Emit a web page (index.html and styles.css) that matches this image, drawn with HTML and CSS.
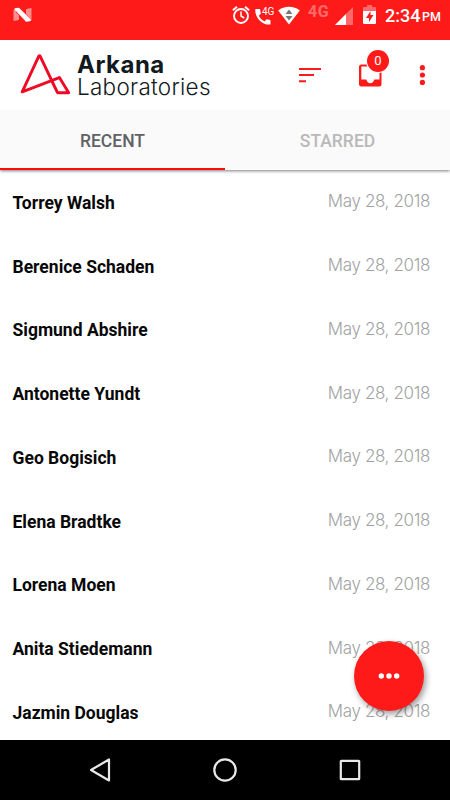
FILE: index.html
```
<!DOCTYPE html>
<html lang="en">
<head>
<meta charset="utf-8">
<title>Arkana Laboratories</title>
<link rel="stylesheet" href="styles.css">
</head>
<body>
<div class="screen">
  <div class="status">
    <svg class="notif" width="20" height="16" viewBox="0 0 20 16"><path d="M.5 3.500 3 1v10L.5 14zM.5 3 6 8v5l-5.500 1zM18.500 1v11.500L13 7V2z" fill="#fff" opacity=".5"/><path d="M1.500 1.500Q2.500.7 6 .7L18.500 13q-1 1.700-5.500 1.700L1.500 2.500z" fill="#fff"/></svg>
    <div class="tray">
      <svg width="18" height="20" viewBox="0 0 18 20" fill="none" stroke="#fff"><circle cx="9" cy="11" r="7" stroke-width="1.900"/><path d="M9 6.500V11l3.200 2" stroke-width="1.500"/><path d="M.9 5.200 5 1.800M13 1.800l4.100 3.400" stroke-width="2"/></svg>
      <div class="call">
        <svg width="16" height="17" viewBox="0 0 16 17"><path d="M1 1h3.300q.8 0 .9.800.1 1.700.6 3.200.2.500-.2 1L3.700 7.700q2 3.800 5.800 5.700l1.800-1.900q.4-.4 1-.2 1.400.5 2.400.5.800 0 .8.900v3q0 .9-.9.900C6.500 16.700.2 9.500.2 1.900.2 1.300.5 1 1 1z" fill="#fff"/></svg>
        <span class="call-net">4G</span>
      </div>
      <svg class="wifi" width="22" height="19" viewBox="0 0 22 19"><path d="M11 18.500.2 4.400Q5 .7 11 .7t10.800 3.700z" fill="#fff"/><path d="m7.500 8 3.500-4.500L14.500 8zM7.500 10h7L11 14.500z" fill="#777"/></svg>
      <span class="net">4G</span>
      <svg class="signal" width="18" height="18" viewBox="0 0 18 18"><path d="M18 0v18H0z" fill="#fff" opacity=".35"/><path d="M11 7v11H0z" fill="#fff"/></svg>
      <svg class="battery" width="13" height="20" viewBox="0 0 13 20"><path d="M0 6V3q0-1 1-1h3V0h5v2h3q1 0 1 1v3z" fill="#fff" opacity=".35"/><path fill-rule="evenodd" d="M0 6h13v12q0 1-1 1H1q-1 0-1-1zm7.500 0L3 13h3v4l4.500-7h-3z" fill="#fff"/></svg>
      <span class="time">2:34</span><span class="pm">PM</span>
    </div>
  </div>
  <header class="bar">
    <svg class="mark" width="52" height="42" viewBox="0 0 52 42" fill="none" stroke="#ee0a24" stroke-width="2.900" stroke-linejoin="round"><path d="M37.500 38.700 20.200 2.300q-.7-1.300-1.500 0L2.200 37.900l37.200-14.300L48.700 38.700H37.500L31.600 26.600"/></svg>
    <div class="brand"><span class="brand-top">Arkana</span><span class="brand-sub">Laboratories</span></div>
    <svg class="sort" width="22" height="16" viewBox="0 0 22 16" fill="#ff1a1a"><path d="M0 1h22v2H0zM0 7h15v2H0zM0 13.200h7v2H0z"/></svg>
    <div class="inbox">
      <svg width="23" height="23" viewBox="0 0 23 23"><path fill-rule="evenodd" d="M2.300.5h18q2.200 0 2.200 2.200v17.500q0 2.300-2.200 2.300h-18q-2.300 0-2.300-2.300V2.700Q0 .5 2.300.5zM2.300 2.500v13h5q1 3.700 4 3.700t4-3.700h5.200v-13z" fill="#ff1a1a"/></svg>
      <span class="badge">0</span>
    </div>
    <svg class="more" width="6" height="20" viewBox="0 0 6 20" fill="#ff1a1a"><circle cx="3.400" cy="2.700" r="2.600"/><circle cx="3.400" cy="10" r="2.600"/><circle cx="3.400" cy="17.400" r="2.600"/></svg>
  </header>
  <nav class="tabs"><div class="tab active">RECENT</div><div class="tab">STARRED</div></nav>
  <main class="list">
    <div class="row"><span class="name">Torrey Walsh</span><span class="date">May 28, 2018</span></div>
    <div class="row"><span class="name">Berenice Schaden</span><span class="date">May 28, 2018</span></div>
    <div class="row"><span class="name">Sigmund Abshire</span><span class="date">May 28, 2018</span></div>
    <div class="row"><span class="name">Antonette Yundt</span><span class="date">May 28, 2018</span></div>
    <div class="row"><span class="name">Geo Bogisich</span><span class="date">May 28, 2018</span></div>
    <div class="row"><span class="name">Elena Bradtke</span><span class="date">May 28, 2018</span></div>
    <div class="row"><span class="name">Lorena Moen</span><span class="date">May 28, 2018</span></div>
    <div class="row"><span class="name">Anita Stiedemann</span><span class="date">May 28, 2018</span></div>
    <div class="row"><span class="name">Jazmin Douglas</span><span class="date">May 28, 2018</span></div>
  </main>
  <div class="fab"><svg width="22" height="6" viewBox="0 0 22 6" fill="#fff"><circle cx="3.300" cy="3" r="2.700"/><circle cx="11" cy="3" r="2.700"/><circle cx="18.700" cy="3" r="2.700"/></svg></div>
  <footer class="keys">
    <svg width="26" height="26" viewBox="0 0 26 26"><path d="M22 2.500v21L4 13z"/></svg>
    <svg width="26" height="26" viewBox="0 0 26 26"><circle cx="13" cy="13" r="10.700"/></svg>
    <svg width="26" height="26" viewBox="0 0 26 26"><rect x="3.800" y="3.800" width="18.400" height="18.400" rx=".5"/></svg>
  </footer>
</div>
</body>
</html>
```
FILE: styles.css
```
* { box-sizing: border-box; }
body { margin: 0; background: #fff; font-family: Roboto, sans-serif; }
svg { display: block; flex: none; }
.screen { position: relative; width: 450px; height: 800px; overflow: hidden; display: flex; flex-direction: column; }
.status { height: 40px; flex: none; background: #ff1a1a; display: flex; justify-content: space-between; padding: 5px 0 0 13px; color: #fff; }
.notif { margin-top: 2px; }
.tray { display: flex; align-items: flex-start; width: 218px; }
.call { position: relative; margin: 3px 0 0 5px; width: 20px; }
.call-net { position: absolute; left: 7px; top: -3px; font: 400 10px/13px Roboto, sans-serif; }
.wifi { margin: 1px 0 0 3px; }
.net { width: 22px; margin-left: 8px; font: 700 16px/13px Roboto, sans-serif; letter-spacing: .5px; opacity: .35; }
.signal { margin: 2px 0 0 5px; }
.battery { margin-left: 10px; }
.time { width: 37px; margin-left: 9px; font: 500 18px/22px Roboto, sans-serif; }
.pm { font: 500 12.5px/24px Roboto, sans-serif; }
.bar { height: 70px; flex: none; display: flex; align-items: flex-start; padding-left: 20px; background: #fff; position: relative; z-index: 2; }
.mark { margin-top: 14px; }
.brand { display: flex; flex-direction: column; width: 140px; margin: 13px 0 0 5px; font-family: Inter, sans-serif; color: #111921; white-space: nowrap; }
.brand-top { font-size: 24px; line-height: 23px; font-weight: 700; letter-spacing: .5px; }
.brand-sub { font-size: 22.5px; line-height: 21px; font-weight: 300; letter-spacing: .28px; }
.sort { margin: 27px 0 0 82px; }
.inbox { position: relative; margin: 24px 0 0 38px; }
.badge { position: absolute; left: 8px; top: -14px; width: 22px; height: 22px; border-radius: 50%; background: #ff1a1a; color: #fff; box-shadow: 0 0 0 1px #fff; font-size: 13px; line-height: 22px; text-align: center; }
.more { margin: 25px 0 0 37px; }
.tabs { height: 60px; flex: none; display: flex; background: #fafafa; box-shadow: 0 1px 3px rgba(0,0,0,.5); position: relative; z-index: 1; }
.tab { flex: 1; text-align: center; font-size: 17.5px; line-height: 62px; font-weight: 500; color: #b9b9b9; }
.tab.active { color: #606264; box-shadow: inset 0 -2px #ff0a0a; }
.list { height: 570px; flex: none; padding-top: 1px; overflow: hidden; }
.row { height: 63.75px; display: flex; justify-content: space-between; align-items: center; padding: 0 20px 0 12.5px; }
.name { font-size: 17.5px; font-weight: 700; line-height: 22px; color: #080808; }
.date { font: 300 17px/22px Inter, sans-serif; letter-spacing: -.37px; color: #a2a2a2; margin-top: -3px; }
.fab { position: absolute; left: 354px; top: 641px; width: 70px; height: 70px; border-radius: 50%; background: #ff1a1a; display: flex; align-items: center; justify-content: center; box-shadow: 2px 3px 6px rgba(0,0,0,.4); z-index: 2; }
.keys { height: 60px; flex: none; background: #000; display: flex; justify-content: space-between; align-items: center; padding: 0 87px; }
.keys svg { fill: none; stroke: #e8e8e8; stroke-width: 2.2; stroke-linejoin: round; }
```
